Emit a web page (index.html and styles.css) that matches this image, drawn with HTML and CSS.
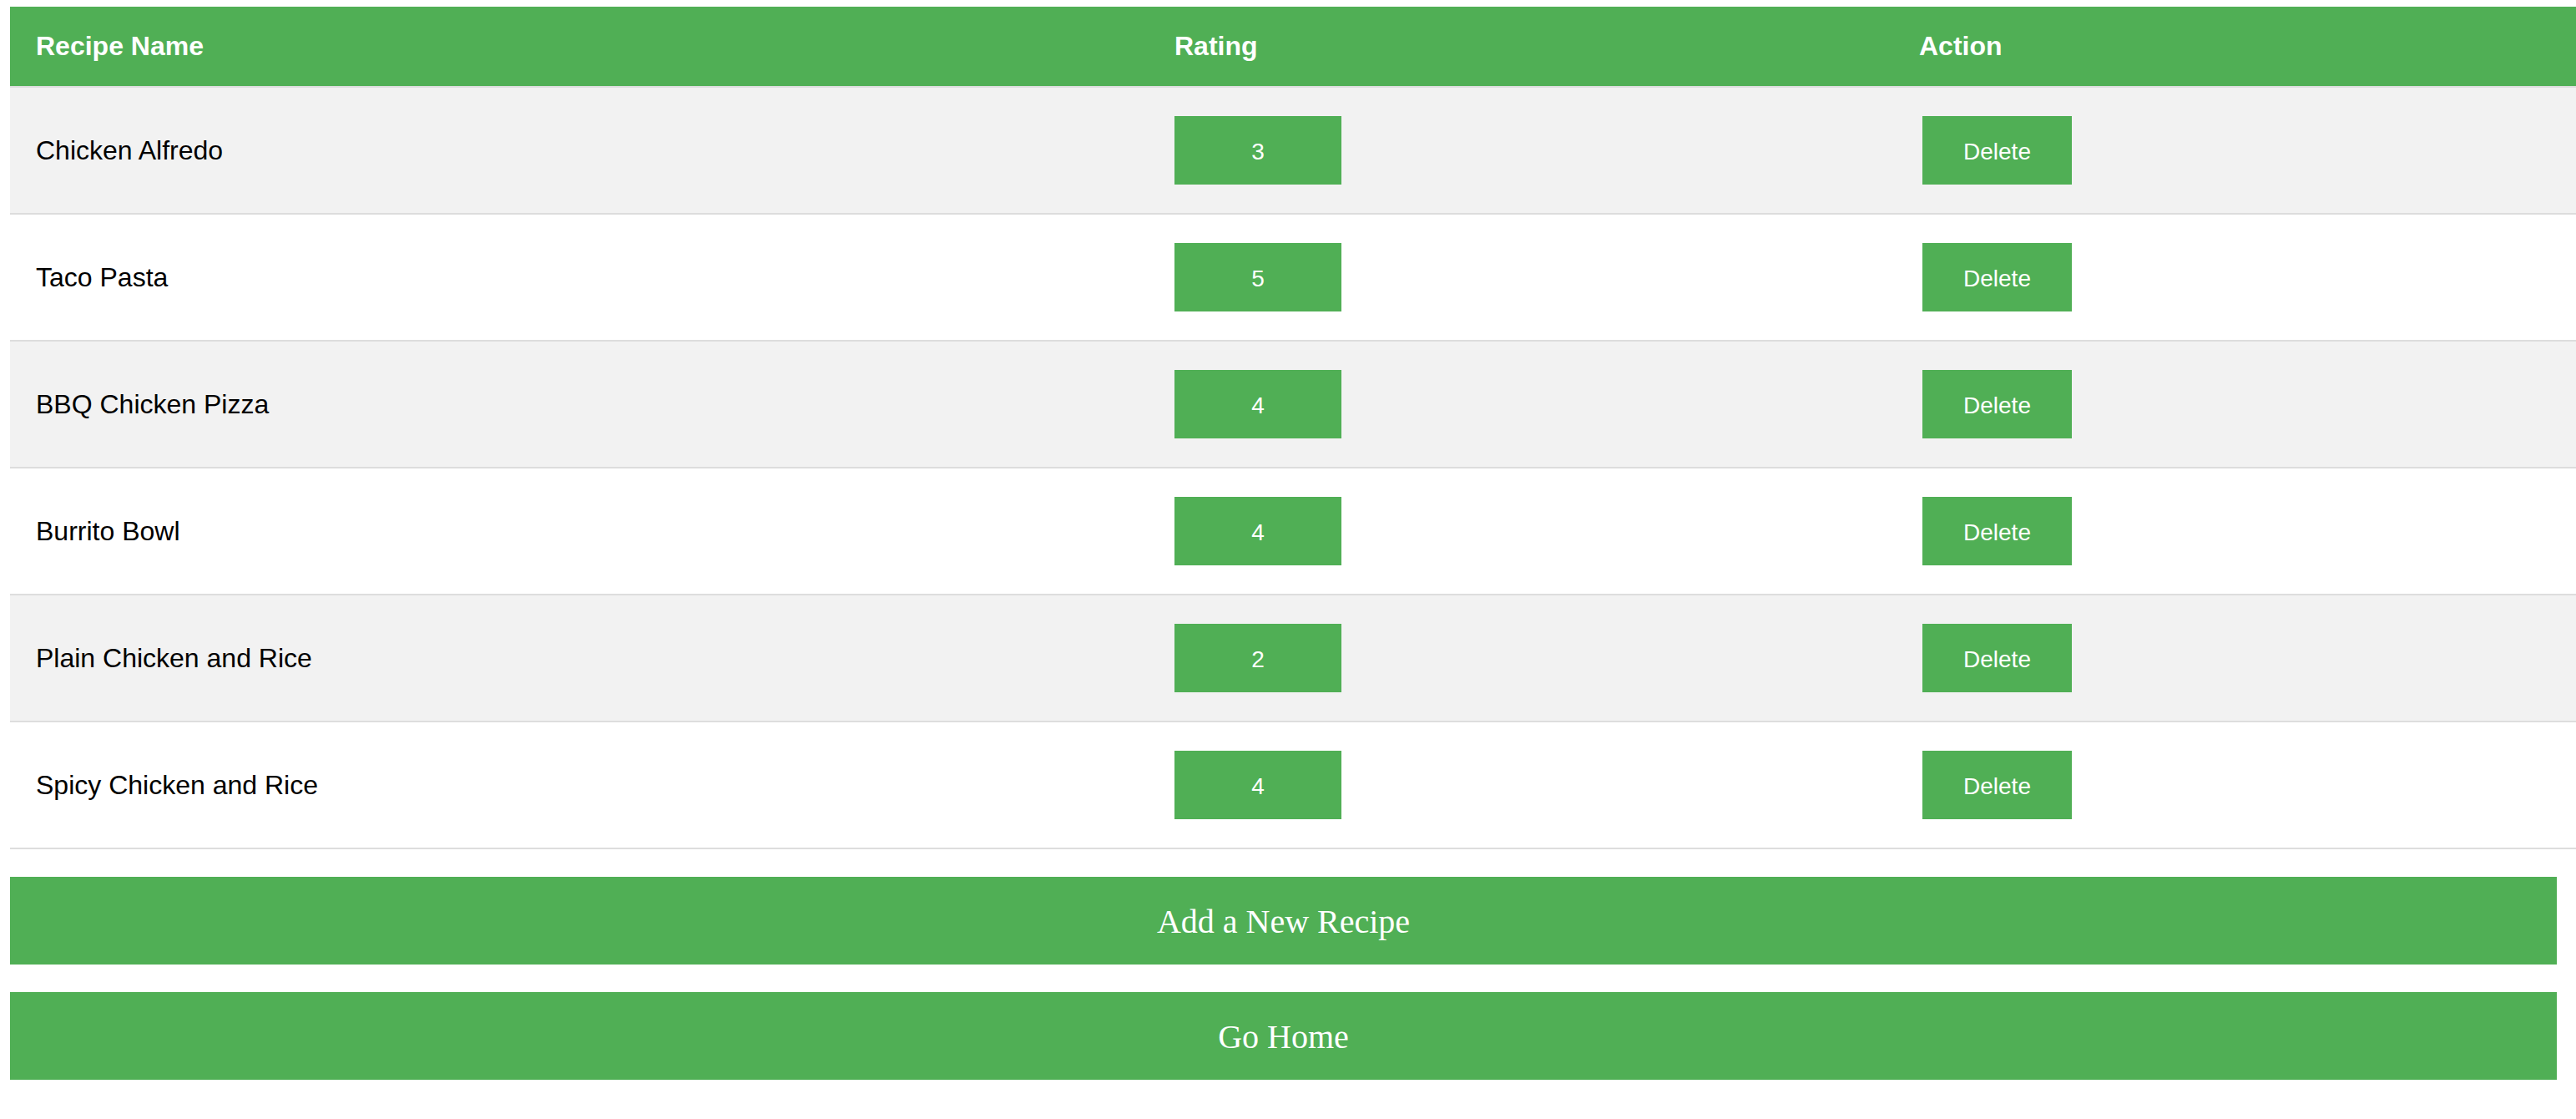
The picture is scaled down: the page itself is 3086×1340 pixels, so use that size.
FILE: index.html
```html
<!DOCTYPE html>
<html lang="en">
<head>
<meta charset="utf-8">
<title>Recipes</title>
<link rel="stylesheet" href="styles.css">
</head>
<body>
<div class="page">
  <table class="recipes">
    <colgroup>
      <col class="col-name">
      <col class="col-rating">
      <col class="col-action">
    </colgroup>
    <thead>
      <tr>
        <th>Recipe Name</th>
        <th>Rating</th>
        <th>Action</th>
      </tr>
    </thead>
    <tbody>
      <tr><td>Chicken Alfredo</td><td><button class="rating-btn">3</button></td><td><button class="delete-btn">Delete</button></td></tr>
      <tr><td>Taco Pasta</td><td><button class="rating-btn">5</button></td><td><button class="delete-btn">Delete</button></td></tr>
      <tr><td>BBQ Chicken Pizza</td><td><button class="rating-btn">4</button></td><td><button class="delete-btn">Delete</button></td></tr>
      <tr><td>Burrito Bowl</td><td><button class="rating-btn">4</button></td><td><button class="delete-btn">Delete</button></td></tr>
      <tr><td>Plain Chicken and Rice</td><td><button class="rating-btn">2</button></td><td><button class="delete-btn">Delete</button></td></tr>
      <tr><td>Spicy Chicken and Rice</td><td><button class="rating-btn">4</button></td><td><button class="delete-btn">Delete</button></td></tr>
    </tbody>
  </table>
  <div class="actions">
    <button class="wide-btn">Add a New Recipe</button>
    <button class="wide-btn">Go Home</button>
  </div>
</div>
</body>
</html>
```

FILE: styles.css
```css
html, body {
  margin: 0;
  padding: 0;
  background: #ffffff;
  overflow: hidden;
}

.page {
  padding: 8px 0 0 12px;
  font-family: "Liberation Sans", Arial, sans-serif;
}

.recipes {
  width: 3074px;
  border-collapse: collapse;
  table-layout: fixed;
}

.col-name { width: 1364px; }
.col-rating { width: 892px; }
.col-action { width: 818px; }

.recipes th {
  background: #50af55;
  color: #ffffff;
  font-weight: bold;
  font-size: 32px;
  text-align: left;
  height: 96px;
  padding: 0 31px;
  border-bottom: 2px solid #dddddd;
  box-sizing: border-box;
  vertical-align: middle;
}

.recipes td {
  font-size: 32px;
  color: #000000;
  text-align: left;
  height: 152px;
  padding: 0 31px;
  border-bottom: 2px solid #dddddd;
  box-sizing: border-box;
  vertical-align: middle;
}

.recipes tbody tr:nth-child(odd) td {
  background: #f2f2f2;
}

.recipes tbody tr:nth-child(even) td {
  background: #ffffff;
}

.rating-btn,
.delete-btn {
  display: block;
  height: 82px;
  border: none;
  margin: 0;
  padding: 3px 0 0;
  background: #50af55;
  color: #ffffff;
  font-family: "Liberation Sans", Arial, sans-serif;
  font-size: 28px;
  text-align: center;
}

.rating-btn {
  width: 200px;
}

.delete-btn {
  width: 179px;
  margin-left: 4px;
}

.actions {
  display: flex;
  flex-direction: column;
  gap: 33px;
  margin-top: 33px;
  width: 3051px;
}

.wide-btn {
  display: block;
  width: 100%;
  height: 105px;
  margin: 0;
  padding: 2px 0 0;
  border: none;
  background: #50af55;
  color: #ffffff;
  font-family: "Liberation Serif", "Times New Roman", serif;
  font-size: 40px;
  text-align: center;
}
```
